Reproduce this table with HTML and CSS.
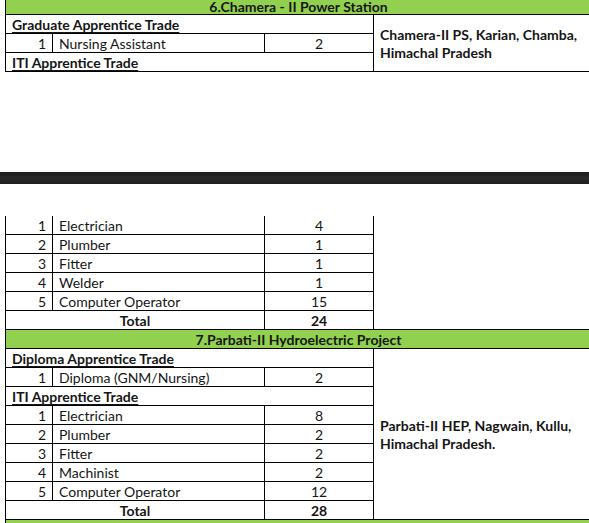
FILE: index.html
```html
<!DOCTYPE html>
<html>
<head>
<meta charset="utf-8">
<link rel="stylesheet" href="styles.css">
</head>
<body>
<div class="sheet">
  <div class="page-top">
    <table class="grid">
      <colgroup><col class="c1"><col class="c2"><col class="c3"><col class="c4"></colgroup>
      <tr class="head short"><td colspan="4">6.Chamera - II Power Station</td></tr>
      <tr><td colspan="3" class="cat"><span>Graduate Apprentice Trade</span></td><td rowspan="3" class="loc">Chamera-II PS, Karian, Chamba,<br>Himachal Pradesh</td></tr>
      <tr><td class="num">1</td><td class="name">Nursing Assistant</td><td class="cnt">2</td></tr>
      <tr><td colspan="3" class="cat"><span>ITI Apprentice Trade</span></td></tr>
    </table>
  </div>
  <div class="band"></div>
  <div class="page-bottom">
    <table class="grid">
      <colgroup><col class="c1"><col class="c2"><col class="c3"><col class="c4"></colgroup>
      <tr class="cont"><td class="num">1</td><td class="name">Electrician</td><td class="cnt">4</td><td rowspan="6" class="loc empty"></td></tr>
      <tr><td class="num">2</td><td class="name">Plumber</td><td class="cnt">1</td></tr>
      <tr><td class="num">3</td><td class="name">Fitter</td><td class="cnt">1</td></tr>
      <tr><td class="num">4</td><td class="name">Welder</td><td class="cnt">1</td></tr>
      <tr><td class="num">5</td><td class="name">Computer Operator</td><td class="cnt">15</td></tr>
      <tr class="total"><td colspan="2">Total</td><td class="cnt">24</td></tr>
      <tr class="head"><td colspan="4">7.Parbati-II Hydroelectric Project</td></tr>
      <tr><td colspan="3" class="cat"><span>Diploma Apprentice Trade</span></td><td rowspan="9" class="loc">Parbati-II HEP, Nagwain, Kullu,<br>Himachal Pradesh.</td></tr>
      <tr><td class="num">1</td><td class="name">Diploma (GNM/Nursing)</td><td class="cnt">2</td></tr>
      <tr><td colspan="3" class="cat"><span>ITI Apprentice Trade</span></td></tr>
      <tr><td class="num">1</td><td class="name">Electrician</td><td class="cnt">8</td></tr>
      <tr><td class="num">2</td><td class="name">Plumber</td><td class="cnt">2</td></tr>
      <tr><td class="num">3</td><td class="name">Fitter</td><td class="cnt">2</td></tr>
      <tr><td class="num">4</td><td class="name">Machinist</td><td class="cnt">2</td></tr>
      <tr><td class="num">5</td><td class="name">Computer Operator</td><td class="cnt">12</td></tr>
      <tr class="total"><td colspan="2">Total</td><td class="cnt">28</td></tr>
      <tr class="head"><td colspan="4"></td></tr>
    </table>
  </div>
</div>
</body>
</html>
```
FILE: styles.css
```css
html, body {
  margin: 0;
  padding: 0;
  background: #ffffff;
  overflow: hidden;
}
body {
  width: 589px;
  height: 523px;
  font-family: Lato, "Liberation Sans", sans-serif;
  font-size: 14px;
  color: #161616;
}
.sheet {
  display: flex;
  flex-direction: column;
}
.page-top {
  height: 73px;
  padding-left: 5px;
  overflow: hidden;
}
.band {
  margin-top: 99px;
  height: 12px;
  background: linear-gradient(#1c1c1c, #2a2a2a 50%, #1f1f1f);
}
.page-bottom {
  margin-top: 32px;
  padding-left: 5px;
}
.grid {
  border-collapse: collapse;
  table-layout: fixed;
  width: 586px;
}
.c1 { width: 47px; }
.c2 { width: 212px; }
.c3 { width: 109px; }
.c4 { width: 218px; }
.grid td {
  border: 1px solid #000;
  padding: 2px 6px 0;
  height: 16px;
  line-height: 16px;
  white-space: nowrap;
  overflow: hidden;
}
.head td {
  background: #92d050;
  font-weight: 700;
  text-align: center;
}
.grid .head.short td {
  height: 14px;
  line-height: 14px;
  padding-top: 0;
  border-top: none;
  overflow: visible;
}
.cat {
  font-weight: 700;
}
.cat span {
  text-decoration: underline;
  text-decoration-thickness: 2px;
  text-underline-offset: 2px;
}
.num {
  text-align: right;
}
.cnt {
  text-align: center;
}
.total td {
  font-weight: 700;
  text-align: center;
}
.grid td.loc {
  font-weight: 700;
  vertical-align: middle;
  line-height: 18px;
  padding-top: 1px;
}
.cont td {
  border-top: none;
}
```
